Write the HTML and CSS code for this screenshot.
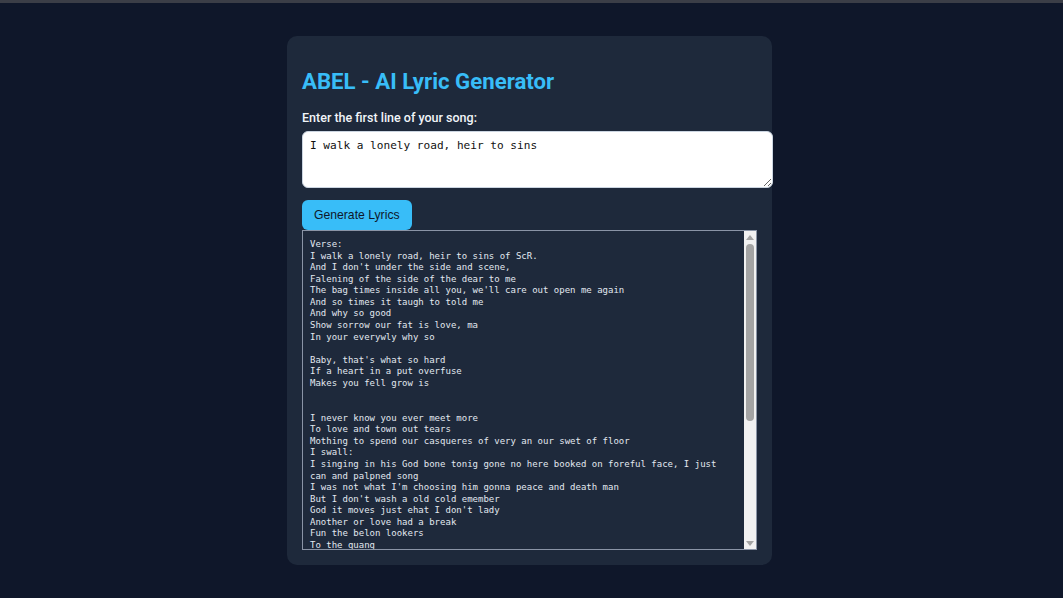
FILE: index.html
```html
<!DOCTYPE html>
<html lang="en">
<head>
<meta charset="utf-8">
<title>ABEL - AI Lyric Generator</title>
<link rel="stylesheet" href="styles.css">
</head>
<body>
<div class="topbar"></div>
<main class="page">
  <section class="card">
    <h1 class="title">ABEL - AI Lyric Generator</h1>
    <label class="label" for="firstLine">Enter the first line of your song:</label>
    <textarea id="firstLine" class="input">I walk a lonely road, heir to sins</textarea>
    <button class="btn" type="button">Generate Lyrics</button>
    <div class="output">
      <div class="output-text">Verse:
I walk a lonely road, heir to sins of ScR.
And I don't under the side and scene,
Falening of the side of the dear to me
The bag times inside all you, we'll care out open me again
And so times it taugh to told me
And why so good
Show sorrow our fat is love, ma
In your everywly why so

Baby, that's what so hard
If a heart in a put overfuse
Makes you fell grow is


I never know you ever meet more
To love and town out tears
Mothing to spend our casqueres of very an our swet of floor
I swall:
I singing in his God bone tonig gone no here booked on foreful face, I just can and palpned song
I was not what I'm choosing him gonna peace and death man
But I don't wash a old cold emember
God it moves just ehat I don't lady
Another or love had a break
Fun the belon lookers
To the quang</div>
      <div class="scrollbar" aria-hidden="true">
        <div class="sb-arrow sb-up"></div>
        <div class="sb-track"><div class="sb-thumb"></div></div>
        <div class="sb-arrow sb-down"></div>
      </div>
    </div>
  </section>
</main>
</body>
</html>
```

FILE: styles.css
```css
html, body {
  margin: 0;
  padding: 0;
}

body {
  background: #0f172a;
  font-family: "Roboto", "Lato", sans-serif;
  color: #e2e8f0;
  min-height: 598px;
}

.topbar {
  height: 3px;
  background: #3b3e47;
}

.page {
  display: flex;
  justify-content: center;
  padding-top: 33px;
  padding-right: 4px;
}

.card {
  width: 455px;
  padding: 15px;
  background: #1e293b;
  border-radius: 10px;
  display: flex;
  flex-direction: column;
  align-items: flex-start;
}

.title {
  margin: 15px 0 13px 0;
  font-size: 22.2px;
  line-height: 30px;
  font-weight: 700;
  color: #38bdf8;
}

.label {
  font-size: 12.5px;
  line-height: 18px;
  font-weight: 500;
  color: #f1f5f9;
  margin-bottom: 4px;
}

.input {
  width: 100%;
  height: 41px;
  padding: 7px;
  border: 1px solid #cbd5e1;
  border-radius: 6px;
  background: #ffffff;
  color: #111111;
  font-family: "DejaVu Sans Mono", "Liberation Mono", monospace;
  font-size: 11.1px;
  line-height: 14px;
  resize: vertical;
  margin: 0;
}

.btn {
  margin-top: 12px;
  height: 30px;
  padding: 0 12px;
  border: none;
  border-radius: 6px;
  background: #38bdf8;
  color: #0f172a;
  font-family: "Liberation Sans", Arial, sans-serif;
  font-size: 12.2px;
  cursor: pointer;
}

.output {
  box-sizing: border-box;
  width: 100%;
  height: 320px;
  border: 1px solid #8a94a6;
  background: #1e293b;
  display: flex;
}

.output-text {
  flex: 1;
  min-width: 0;
  overflow: hidden;
  padding: 8px 14px 0 7px;
  color: #e2e8f0;
  font-family: "DejaVu Sans Mono", "Liberation Mono", monospace;
  font-size: 9px;
  line-height: 11.58px;
  white-space: pre-wrap;
}

.scrollbar {
  width: 12px;
  background: #f1f1f1;
  display: flex;
  flex-direction: column;
}

.sb-arrow {
  height: 12px;
  display: flex;
  align-items: center;
  justify-content: center;
}

.sb-up::before,
.sb-down::before {
  content: "";
  width: 0;
  height: 0;
  border-left: 4px solid transparent;
  border-right: 4px solid transparent;
}

.sb-up::before {
  border-bottom: 5px solid #a3a3a3;
}

.sb-down::before {
  border-top: 5px solid #a3a3a3;
}

.sb-track {
  flex: 1;
  padding: 1px 2px 0 2px;
}

.sb-thumb {
  height: 177px;
  background: #a3a3a3;
  border-radius: 4px;
}
```
